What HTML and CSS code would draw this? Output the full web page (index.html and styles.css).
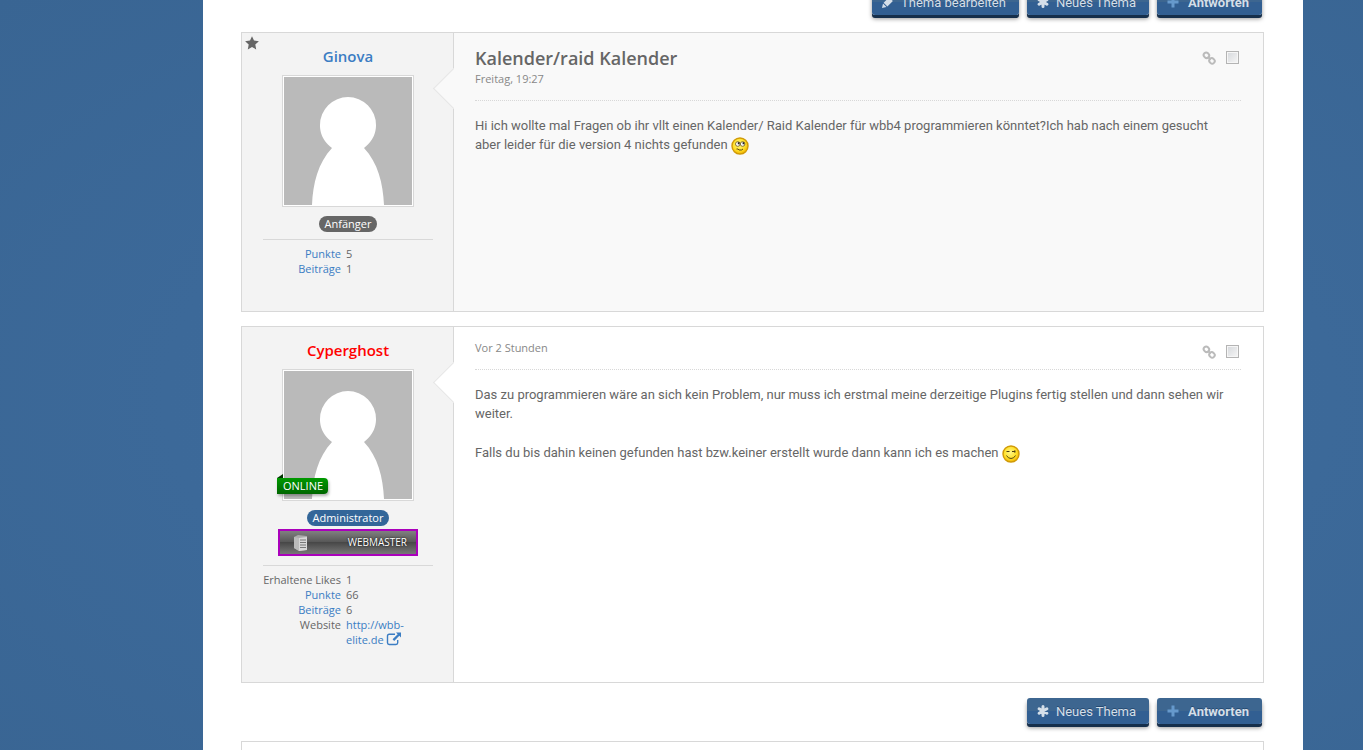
FILE: index.html
```html
<!DOCTYPE html>
<html lang="de">

<head>
    <meta charset="utf-8">
    <title>Kalender/raid Kalender</title>
    <link rel="stylesheet" href="styles.css">
</head>

<body>
    <!-- Shared icons -->
    <svg class="sprite" width="0" height="0" aria-hidden="true">
        <symbol id="icon-pencil" viewBox="0 0 14 14">
            <path d="M1 13l1-4.500 3.500 3.500zM2.600 7.800l5.500-5.500 3.800 3.800-5.500 5.500zM8.900 1.500l.7-.7q.6-.5 1.200 0l2.400 2.400q.5.600 0 1.200l-.7.700z"/>
        </symbol>
        <symbol id="icon-asterisk" viewBox="0 0 14 14">
            <path d="M7 2.500v9M3.100 4.700l7.800 4.600M10.900 4.700l-7.800 4.600" stroke="currentColor" stroke-width="3" stroke-linecap="round"/>
        </symbol>
        <symbol id="icon-plus" viewBox="0 0 14 14">
            <path d="M5.500 1.500h3v4h4v3h-4v4h-3v-4h-4v-3h4z"/>
        </symbol>
        <symbol id="icon-link" viewBox="0 0 14 14">
            <g fill="none" stroke="currentColor" stroke-width="2">
                <rect x="1.600" y="1.800" width="5.600" height="5" rx="2.500" transform="rotate(45 4.400 4.300)"/>
                <rect x="7.200" y="7.400" width="5.600" height="5" rx="2.500" transform="rotate(45 10 9.900)"/>
                <path d="M5.800 5.700l2.800 2.800"/>
            </g>
        </symbol>
        <symbol id="icon-star" viewBox="0 0 14 14">
            <path d="M7 .2l2 4.400 4.900.6-3.600 3.300.9 4.900L7 11l-4.200 2.400.9-4.900L.1 5.200 5 4.600z"/>
        </symbol>
        <symbol id="icon-external" viewBox="0 0 16 14">
            <path d="M9 2.200H3.200q-1.700 0-1.700 1.700v6.900q0 1.700 1.700 1.700H10q1.700 0 1.700-1.700V8" fill="none" stroke="currentColor" stroke-width="1.400"/>
            <path d="M10 .5h5v5l-1.700-1.700-5.100 5.100-1.600-1.600 5.100-5.100z"/>
        </symbol>
        <symbol id="avatar" viewBox="0 0 128 128">
            <rect width="128" height="128" fill="#bababa"/>
            <path d="M48 71C36 62 36 51 36 48a28 28 0 0 1 56 0c0 3 0 14-12 23 14 15 19 35 20 57H28c1-22 6-42 20-57z" fill="#fff"/>
        </symbol>
        <radialGradient id="smileyFill" cx="45%" cy="40%" r="60%">
            <stop offset="0" stop-color="#fff68a"/>
            <stop offset=".6" stop-color="#ffe22e"/>
            <stop offset="1" stop-color="#f5b800"/>
        </radialGradient>
    </svg>

    <main class="main">
        <!-- Top buttons -->
        <div class="toolbar toolbar-top">
            <button class="button" type="button"><svg class="icon"><use href="#icon-pencil"/></svg>Thema bearbeiten</button>
            <button class="button" type="button"><svg class="icon"><use href="#icon-asterisk"/></svg>Neues Thema</button>
            <button class="button button-primary" type="button"><svg class="icon"><use href="#icon-plus"/></svg>Antworten</button>
        </div>

        <!-- First post -->
        <article class="post post-first">
            <aside class="author">
                <svg class="icon author-star"><use href="#icon-star"/></svg>
                <a class="username" href="#">Ginova</a>
                <a class="avatar" href="#" aria-label="Ginova"><svg width="128" height="128"><use href="#avatar"/></svg></a>
                <span class="badge">Anfänger</span>
                <dl class="stats">
                    <dt><a href="#">Punkte</a></dt>
                    <dd>5</dd>
                    <dt><a href="#">Beiträge</a></dt>
                    <dd>1</dd>
                </dl>
            </aside>
            <section class="content">
                <header class="content-header">
                    <div>
                        <h1>Kalender/raid Kalender</h1>
                        <a class="date" href="#">Freitag, 19:27</a>
                    </div>
                    <div class="post-options">
                        <a href="#" aria-label="Link"><svg class="icon"><use href="#icon-link"/></svg></a>
                        <input type="checkbox" aria-label="Beitrag 1 markieren">
                    </div>
                </header>
                <p>Hi ich wollte mal Fragen ob ihr vllt einen Kalender/ Raid Kalender für wbb4 programmieren könntet?Ich hab nach einem gesucht aber leider für die version 4 nichts gefunden
                    <svg class="smiley" viewBox="0 0 18 18">
                        <circle cx="9" cy="9" r="8" fill="url(#smileyFill)" stroke="#d09a08" stroke-width="1.400"/>
                        <circle cx="6.800" cy="7" r="2.300" fill="#fff" stroke="#6b5610" stroke-width=".8"/>
                        <circle cx="11.600" cy="7" r="2.300" fill="#fff" stroke="#6b5610" stroke-width=".8"/>
                        <path d="M6.800 5.300h1.700v2H6.800zM11.600 5.300h1.700v2h-1.700z" fill="#222"/>
                        <path d="M5.500 12h1.500l1 1h2.500l1.500-1" fill="none" stroke="#5b4a12"/>
                    </svg>
                </p>
            </section>
        </article>

        <!-- Answer -->
        <article class="post">
            <aside class="author">
                <a class="username username-admin" href="#">Cyperghost</a>
                <a class="avatar" href="#" aria-label="Cyperghost"><svg width="128" height="128"><use href="#avatar"/></svg><span class="online">ONLINE</span></a>
                <span class="badge badge-admin">Administrator</span>
                <div class="rank">
                    <svg width="16" height="18" viewBox="0 0 16 18">
                        <path d="M1 3l4-2 9 1v14l-8 1-5-3z" fill="#aaa"/>
                        <path d="M6 4l8-1v13l-8 1z" fill="#d8d8d8"/>
                        <path d="M1 3l5 1v13l-5-3z" fill="#bbb"/>
                        <path d="M7 6h6M7 8.500h6M7 11h6M7 13.500h6" stroke="#777"/>
                    </svg>
                    <span>WEBMASTER</span>
                </div>
                <dl class="stats">
                    <dt>Erhaltene Likes</dt>
                    <dd>1</dd>
                    <dt><a href="#">Punkte</a></dt>
                    <dd>66</dd>
                    <dt><a href="#">Beiträge</a></dt>
                    <dd>6</dd>
                    <dt>Website</dt>
                    <dd><a href="#">http://wbb-<br>elite.de <svg class="icon-external"><use href="#icon-external"/></svg></a></dd>
                </dl>
            </aside>
            <section class="content">
                <header class="content-header">
                    <a class="date" href="#">Vor 2 Stunden</a>
                    <div class="post-options">
                        <a href="#" aria-label="Link"><svg class="icon"><use href="#icon-link"/></svg></a>
                        <input type="checkbox" aria-label="Beitrag 2 markieren">
                    </div>
                </header>
                <p>Das zu programmieren wäre an sich kein Problem, nur muss ich erstmal meine derzeitige Plugins fertig stellen und dann sehen wir weiter.</p>
                <p>Falls du bis dahin keinen gefunden hast bzw.keiner erstellt wurde dann kann ich es machen
                    <svg class="smiley" viewBox="0 0 18 18">
                        <circle cx="9" cy="9" r="8" fill="url(#smileyFill)" stroke="#d09a08" stroke-width="1.400"/>
                        <path d="M4.500 6.500h3M10 6.500h2" fill="none" stroke="#4b3d10"/>
                        <path d="M12 5.500h1.500v2H12z" fill="#4b3d10"/>
                        <path d="M4.500 10.500q1.500 3 4.500 3t4.500-3" fill="none" stroke="#5b4a12"/>
                    </svg>
                </p>
            </section>
        </article>

        <!-- Bottom buttons -->
        <div class="toolbar">
            <button class="button" type="button"><svg class="icon"><use href="#icon-asterisk"/></svg>Neues Thema</button>
            <button class="button button-primary" type="button"><svg class="icon"><use href="#icon-plus"/></svg>Antworten</button>
        </div>

        <div class="box"></div>
    </main>
</body>

</html>
```
FILE: styles.css
```css
* {
    box-sizing: border-box;
}

html {
    height: 100%;
    overflow: hidden;
}

body {
    margin: 0;
    padding: 0 60px 0 203px;
    background: #3a6797 radial-gradient(ellipse at 55% 400px, #3f6d9f 0, #3c6999 55%, #396593 100%);
    color: #666;
    font-family: "Open Sans", sans-serif;
    font-size: 11px;
    line-height: 15px;
}

a {
    color: #3b7dc3;
    text-decoration: none;
}

.sprite {
    position: absolute;
}

.icon {
    width: 14px;
    height: 14px;
    fill: currentColor;
}

.main {
    display: flow-root;
    min-height: 100vh;
    padding: 0 39px 0 38px;
    background-color: #fff;
}

/* Buttons */
.toolbar {
    display: flex;
    justify-content: flex-end;
    gap: 8px;
    padding: 1px 2px 3px;
    margin-bottom: 14px;
}

.toolbar-top {
    margin-top: -12px;
}

.button {
    display: flex;
    align-items: center;
    gap: 6px;
    height: 26px;
    padding: 0 13px 0 9px;
    border: 0;
    border-radius: 3px;
    background: linear-gradient(#3d6690 50%, #325f92 50%);
    box-shadow: 0 3px 0 #162f4b, 0 4px 4px rgba(0, 0, 0, .4);
    color: #d5dfe9;
    font-family: Roboto, sans-serif;
    font-size: 13px;
    text-shadow: 0 -1px 0 #264a70;
}

.button-primary {
    gap: 8px;
    font-weight: bold;
}

.button-primary .icon {
    color: #69c;
}

/* Posts */
.post {
    display: flex;
    margin-bottom: 14px;
    border: 1px solid #d8d8d8;
    background-color: #fff;
}

.post-first {
    background-color: #f9f9f9;
}

.author {
    position: relative;
    display: flex;
    flex: 0 0 212px;
    flex-direction: column;
    align-items: center;
    padding: 13px 20px 35px 21px;
    border-right: 1px solid #d8d8d8;
    background-color: #f3f3f3;
}

.author-star {
    position: absolute;
    top: 3px;
    left: 3px;
}

.username {
    margin-bottom: 9px;
    font-size: 15px;
    font-weight: 600;
    line-height: 20px;
}

.username-admin {
    color: #f00;
}

.avatar {
    position: relative;
    padding: 1px;
    border: 1px solid #d8d8d8;
    background-color: #fff;
}

.avatar svg {
    display: block;
}

.online {
    position: absolute;
    bottom: 6px;
    left: -6px;
    padding: 0 5px 0 6px;
    border-radius: 0 4px 4px 0;
    background: linear-gradient(#090, #060);
    box-shadow: 1px 2px 3px rgba(0, 0, 0, .3);
    color: #fff;
    line-height: 16px;
}

/* folded corner of the ribbon */
.online::before {
    content: "";
    position: absolute;
    top: -4px;
    left: 0;
    border-left: 6px solid transparent;
    border-bottom: 4px solid #030;
}

.badge {
    margin-top: 9px;
    padding: 0 6px;
    border-radius: 8px;
    background-color: #666;
    color: #fff;
    line-height: 16px;
}

.badge-admin {
    background-color: #369;
}

.rank {
    display: flex;
    align-items: center;
    justify-content: space-between;
    width: 140px;
    height: 27px;
    margin: 3px 0 2px;
    padding: 0 9px 0 13px;
    border: 2px solid #a0b;
    background: linear-gradient(#808080, #555 50%, #484848 50%, #777);
    color: #fff;
    font-size: 10px;
    text-shadow: 0 0 2px #000;
}

.stats {
    display: grid;
    grid-template-columns: 78px 1fr;
    column-gap: 5px;
    width: 100%;
    margin: 7px 0 0;
    padding-top: 6px;
    border-top: 1px solid #d8d8d8;
}

.stats dt {
    text-align: right;
    white-space: nowrap;
}

.stats dd {
    margin: 0;
}

.icon-external {
    width: 16px;
    height: 14px;
    fill: currentColor;
    vertical-align: -2px;
}

.content {
    position: relative;
    flex: 1;
    padding: 13px 22px 14px 21px;
    background-color: inherit;
}

/* arrow pointing to the author */
.content::before {
    content: "";
    position: absolute;
    top: 41px;
    left: -15px;
    width: 28px;
    height: 28px;
    border: 1px solid #e5e5e5;
    border-width: 0 0 1px 1px;
    background-color: inherit;
    transform: rotate(45deg);
}

.content-header {
    display: flex;
    justify-content: space-between;
    padding-bottom: 14px;
    border-bottom: 1px dotted #d8d8d8;
}

.content-header h1 {
    margin: 0;
    font-size: 18px;
    font-weight: 600;
    line-height: 25px;
}

.date {
    display: block;
    color: #888;
}

.post-options {
    display: flex;
    gap: 10px;
    height: 13px;
    padding: 5px 2px 0 0;
}

.post-options a {
    color: #bbb;
}

.post-options input {
    flex: none;
    width: 13px;
    height: 13px;
    margin: 0;
    border: 1px solid #b4b4b4;
    background: linear-gradient(135deg, #d5d8dc, #f6f6f6);
    box-shadow: inset 0 0 0 1px #f6f6f6;
    appearance: none;
}

.content p {
    margin: 15px 0 20px;
    padding-right: 10px;
    font-family: Roboto, sans-serif;
    font-size: 13px;
    line-height: 19px;
}

.smiley {
    width: 18px;
    height: 18px;
    margin: -4px 0;
    vertical-align: -2px;
}

.box {
    height: 60px;
    border: 1px solid #d8d8d8;
}
```
